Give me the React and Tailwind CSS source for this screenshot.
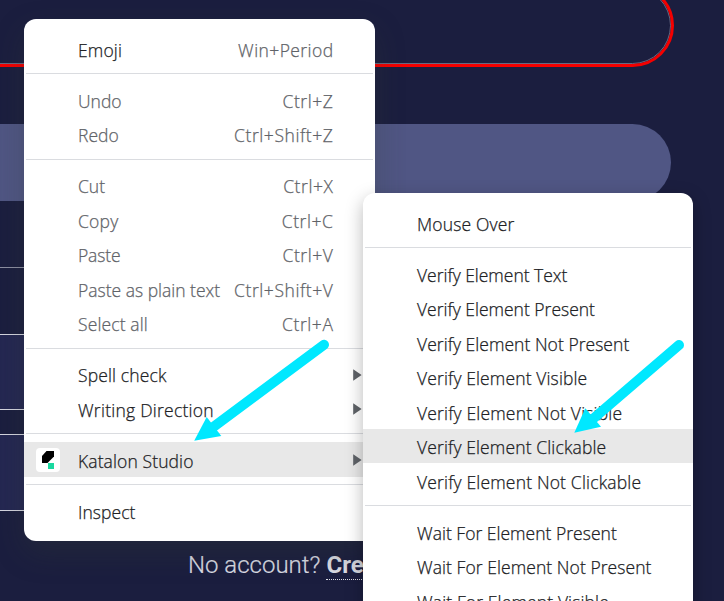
import React from 'react';

const Separator = () => (
  <div className="h-[16.5px] px-[2px] pt-[7.5px]">
    <div className="h-px bg-[#dadce0]" />
  </div>
);

const Caret = () => (
  <svg className="mt-[2px] h-[12px] w-[9px] shrink-0" viewBox="0 0 9 12">
    <path d="M0.2 0.3 L8.6 6 L0.2 11.7 Z" fill="#5f6368" />
  </svg>
);

const KatalonLogo = () => (
  <svg className="mt-px h-6 w-6" viewBox="0 0 24 24">
    <rect width="24" height="24" rx="4" fill="#fff" />
    <path d="M10.5 3 H18 V8.5 L11.5 15 H6 V8 Z" fill="#000" />
    <rect x="12" y="15" width="6" height="6" fill="#19d89f" />
  </svg>
);

function Row({ label, track = '', keys, keysTrack = 'tracking-[0.58px]', muted, active, caret, icon }) {
  return (
    <div className={`flex h-[34.5px] items-center ${active ? 'bg-[#e8e8e8]' : ''}`}>
      <div className="flex w-[54px] shrink-0 pl-3">{icon}</div>
      <span className={`pt-[3px] ${track} ${muted ? 'text-[#5f6368]' : 'text-[#202124]'}`}>{label}</span>
      {keys && <span className={`ml-auto mr-[41.5px] pt-[3px] text-[#5f6368] ${keysTrack}`}>{keys}</span>}
      {caret && <div className="ml-auto mr-[13px] flex"><Caret /></div>}
    </div>
  );
}

const menuBase =
  'absolute whitespace-nowrap bg-white text-[17.5px] leading-[24px] font-light [-webkit-text-stroke:0.25px] font-["Open_Sans","Noto_Sans",sans-serif]';

export default function App() {
  return (
    <div className="relative h-[601px] w-[724px] overflow-hidden bg-[#1b1e3f]">
      <div className="flex flex-col">
        <div className="-ml-12 -mt-[13px] h-[77px] w-[719px] rounded-[38.5px] border border-[#666882] outline-[3px] outline-[#f40000]" />
        <div className="-ml-12 mt-[60px] h-[77px] w-[719px] rounded-[38.5px] bg-[#505684]" />
        <div className="mt-[66px] h-px w-[200px] bg-[#8d8fa2]" />
        <div className="mt-[66px] h-[76px] w-[200px] border-y border-[#d5d6e0] bg-[#242752]" />
        <div className="mt-[24px] h-[77px] w-[200px] border-y border-[#d5d6e0] bg-[#242752]" />
        <div className="mt-[38px] flex items-start gap-[6px] whitespace-nowrap pl-[188px] font-[Roboto,sans-serif] text-[24px] leading-[32px] text-[#dcdde5]">
          <span className="font-light [-webkit-text-stroke:0.2px]">No account?</span>
          <span className="h-[31px] border-b border-dotted border-[#dcdde5] font-bold">Cre</span>
        </div>
      </div>

      <div className={`${menuBase} left-6 top-[19px] h-[522px] w-[351px] rounded-[12px] pt-3 shadow-[0_12px_30px_rgba(50,60,50,0.3)]`}>
        <Row label="Emoji" track="tracking-[0.15px]" keys="Win+Period" keysTrack="tracking-[0.42px]" />
        <Separator />
        <Row muted label="Undo" keys="Ctrl+Z" />
        <Row muted label="Redo" keys="Ctrl+Shift+Z" />
        <Separator />
        <Row muted label="Cut" keys="Ctrl+X" />
        <Row muted label="Copy" track="tracking-[0.25px]" keys="Ctrl+C" />
        <Row muted label="Paste" track="tracking-[-0.15px]" keys="Ctrl+V" />
        <Row muted label="Paste as plain text" keys="Ctrl+Shift+V" />
        <Row muted label="Select all" track="tracking-[0.12px]" keys="Ctrl+A" />
        <Separator />
        <Row label="Spell check" track="tracking-[0.14px]" caret />
        <Row label="Writing Direction" track="tracking-[0.25px]" caret />
        <Separator />
        <Row label="Katalon Studio" track="tracking-[0.11px]" caret active icon={<KatalonLogo />} />
        <Separator />
        <Row label="Inspect" track="tracking-[0.05px]" />
      </div>

      <div className={`${menuBase} left-[363px] top-[193px] h-[440px] w-[330px] rounded-[12px] pt-3 shadow-[0_6px_18px_rgba(0,0,0,0.28)]`}>
        <Row label="Mouse Over" track="tracking-[0.15px]" />
        <Separator />
        <Row label="Verify Element Text" track="tracking-[-0.02px]" />
        <Row label="Verify Element Present" />
        <Row label="Verify Element Not Present" track="tracking-[0.04px]" />
        <Row label="Verify Element Visible" track="tracking-[0.13px]" />
        <Row label="Verify Element Not Visible" track="tracking-[0.17px]" />
        <Row label="Verify Element Clickable" track="tracking-[0.13px]" active />
        <Row label="Verify Element Not Clickable" track="tracking-[0.17px]" />
        <Separator />
        <Row label="Wait For Element Present" track="tracking-[0.02px]" />
        <Row label="Wait For Element Not Present" track="tracking-[0.07px]" />
        <Row label="Wait For Element Visible" track="tracking-[0.13px]" />
      </div>

      <svg className="absolute left-0 top-0 h-[601px] w-[724px]" viewBox="0 0 724 601" fill="#00e8ff" stroke="#00e8ff">
        <path d="M324 344.8 L214 426.5" strokeWidth="10" strokeLinecap="round" />
        <path d="M194.2 440.8 L206.7 417 L221.3 436 Z" stroke="none" />
        <path d="M679 345 L594 418" strokeWidth="10" strokeLinecap="round" />
        <path d="M574.3 432.8 L585.3 408.3 L601 426.7 Z" stroke="none" />
      </svg>
    </div>
  );
}
